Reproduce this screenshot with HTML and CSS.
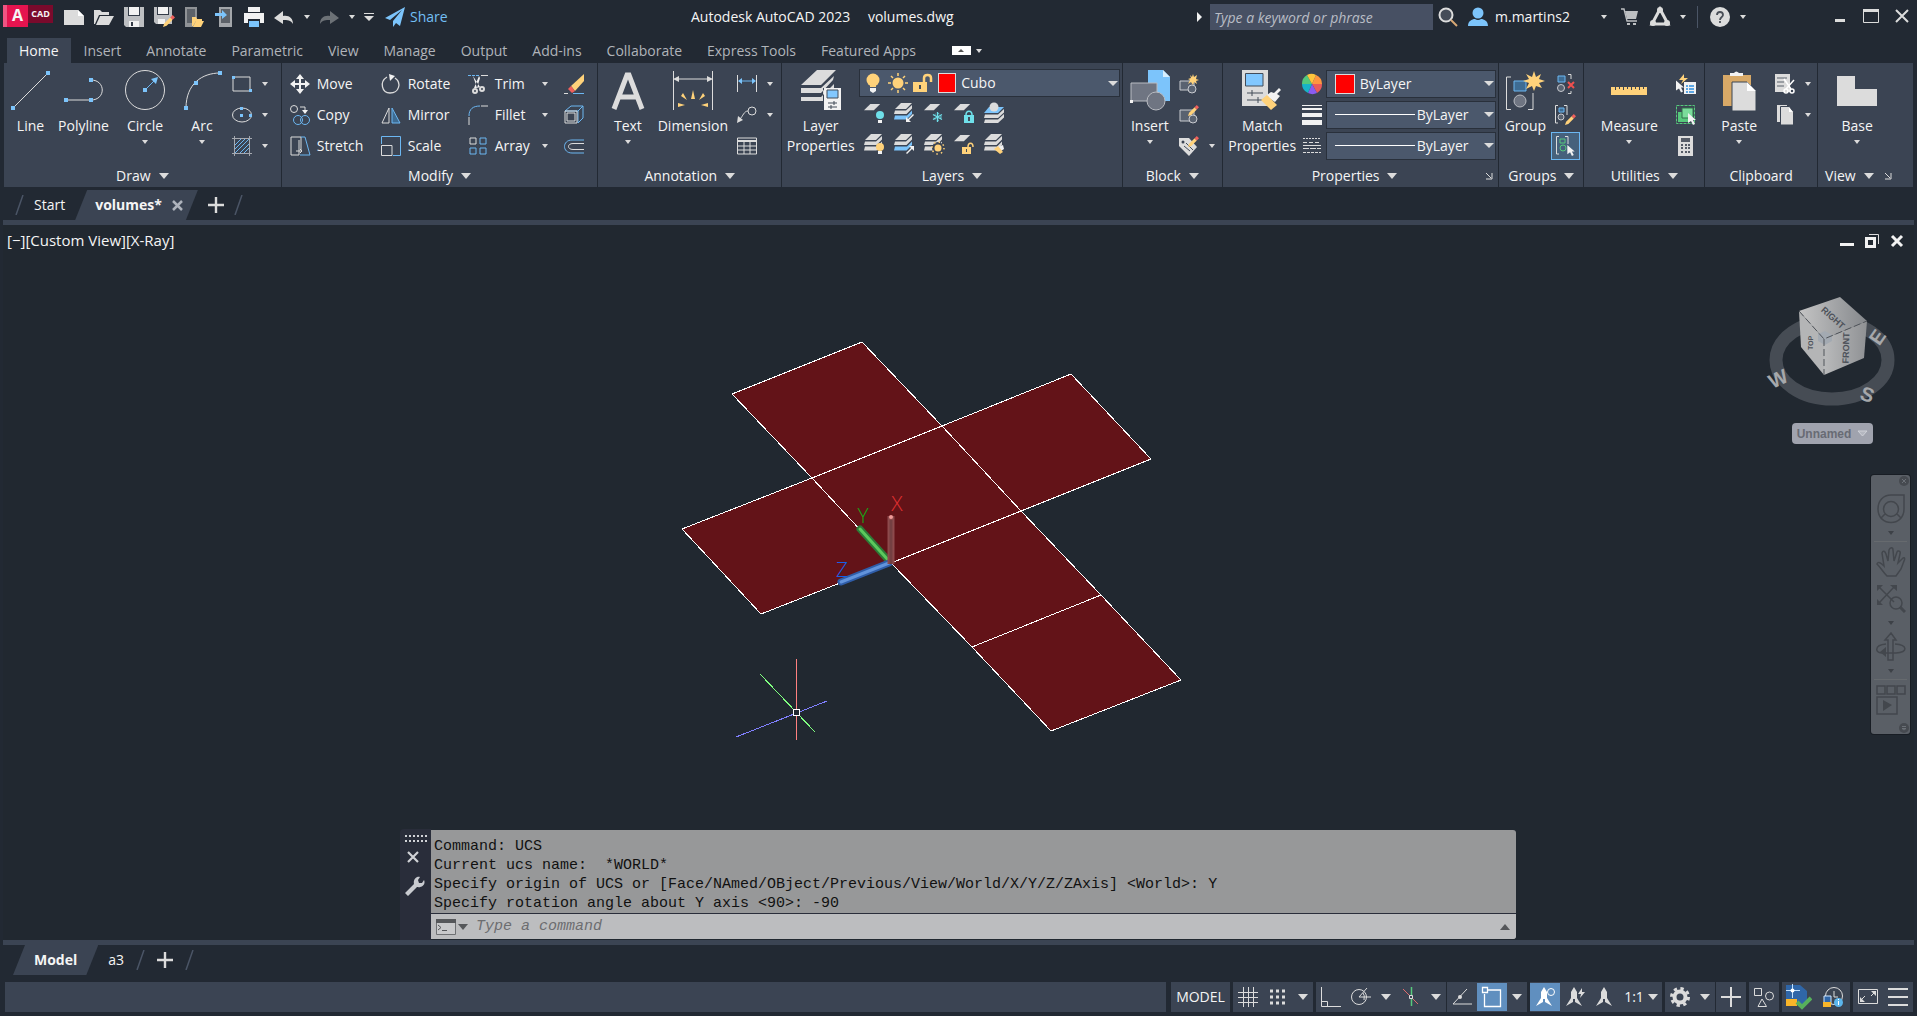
FILE: index.html
```html
<!DOCTYPE html>
<html lang="en">

<head>
    <meta charset="UTF-8">
    <meta name="viewport" content="width=device-width, initial-scale=1.0">
    <title>Autodesk AutoCAD 2023 - volumes.dwg</title>
    <link rel="stylesheet" href="styles.css">
</head>

<body>
    <!-- Shared icon parts -->
    <svg class="sprite" aria-hidden="true">
        <symbol id="sheet" viewBox="0 0 20 20"><path class="fg" d="M7 1H18L11 8H0Z"/></symbol>
        <symbol id="stack" viewBox="0 0 20 20"><path class="fg" d="M7 0H18L12 6H1Z"/><path class="fg" d="M1 7.500H12L18 2V5.500L12.500 11H0ZM1 12.500H13L18 7.500V11L12.500 16.500H0Z"/></symbol>
        <symbol id="stackblue" viewBox="0 0 20 20"><path class="fg" d="M7 0H18L12 6H1ZM1 7.500H12L18 2V5.500L12.500 11H0Z"/><path class="fb" d="M1 12.500H13L18 7.500V11L12.500 16.500H0Z"/></symbol>
        <symbol id="pencil" viewBox="0 0 10 10"><path class="fy" d="M0 10L1 7L6 2L8 4L3 9Z"/><path class="fr" d="M6 2L8 0L10 2L8 4Z"/></symbol>
        <symbol id="cursor" viewBox="0 0 8 12"><path class="fw" d="M0 0V10L3 8L5 12L7 11L5 7H8Z"/></symbol>
        <symbol id="launch" viewBox="0 0 8 8"><path class="ln" d="M1 1L6 6M7 1V7H1"/></symbol>
        <symbol id="slash" viewBox="0 0 9 20"><path d="M8 0L1 20" stroke="#4b5566" stroke-width="1.5"/></symbol>
        <symbol id="plus" viewBox="0 0 16 16"><path class="ln" stroke-width="2.4" d="M8 0V16M0 8H16"/></symbol>
        <symbol id="anno" viewBox="0 0 20 20"><path d="M9 0L12 5L12 11L17 19L10 15V12H8V15L1 19L6 11V5Z"/></symbol>
    </svg>

    <!-- Title bar -->
    <header class="titlebar">
        <button class="logo" aria-label="Application menu"><span class="logo-a">A</span><span class="logo-cad">CAD</span></button>
        <button class="tool" aria-label="New"><svg class="ico" viewBox="0 0 20 20"><path class="fg" d="M0 3H14L20 9V18H0Z"/><path fill="#fff" d="M14 3V9H20Z"/></svg></button>
        <button class="tool" aria-label="Open"><svg class="ico" viewBox="0 0 20 20"><path class="fg" d="M0 3H6L8 5H15V8H5L1 17H0Z"/><path class="fg" d="M6 9H20L15 18H2Z"/></svg></button>
        <button class="tool" aria-label="Save"><svg class="ico" viewBox="0 0 20 20"><path fill="#bdbfc2" d="M0 0H20V20H2L0 18Z"/><path fill="#333b47" d="M4 0H16V9H4Z"/><path class="fw" d="M5 0H15V8H5ZM5 14H15V20H5Z"/><path fill="#333b47" d="M7 15H9V19H7Z"/></svg></button>
        <button class="tool" aria-label="Save as"><svg class="ico" viewBox="0 0 20 20"><path fill="#bdbfc2" d="M0 0H18V17H2L0 15Z"/><path fill="#333b47" d="M3 0H15V8H3Z"/><path class="fw" d="M4 0H14V7H4ZM4 12H11V17H4Z"/><use href="#pencil" x="9" y="8" width="12" height="12"/></svg></button>
        <button class="tool" aria-label="Open from web"><svg class="ico" viewBox="0 0 20 20"><path fill="#8f9296" d="M1 0H13V20H1Z"/><path fill="#5d6269" d="M3 2H11V16H3Z"/><path class="fy" d="M8 10H12L13 12H18V14H12L9 19H8Z"/><path class="fy" d="M12 14H20L17 20H9Z"/></svg></button>
        <button class="tool" aria-label="Save to web"><svg class="ico" viewBox="0 0 20 20"><path fill="#a3a6aa" d="M5 0H18V20H5Z"/><path fill="#5d6269" d="M7 2H16V16H7Z"/><path class="fb" d="M1 6H8V3L13 8L8 12V9H1Z"/></svg></button>
        <button class="tool" aria-label="Plot"><svg class="ico" viewBox="0 0 20 20"><path class="fw" d="M4 0H16V5H4ZM0 6H20V16H16V12H4V16H0Z"/><path class="fb" d="M5 14H15V20H5Z"/></svg></button>
        <button class="tool" aria-label="Undo"><svg class="ico" viewBox="0 0 20 20"><path class="fg" d="M0 11L9 4V9C15 8 19 11 19 17C17 13 13 13 9 13V17Z"/></svg></button>
        <button class="drop" aria-label="Undo list"><span class="caret"></span></button>
        <button class="tool dim" aria-label="Redo"><svg class="ico" viewBox="0 0 20 20"><path class="fg" d="M20 11L11 4V9C5 8 1 11 1 17C3 13 7 13 11 13V17Z"/></svg></button>
        <button class="drop" aria-label="Redo list"><span class="caret"></span></button>
        <button class="drop more" aria-label="Customize toolbar"><svg width="10" height="10" viewBox="0 0 10 10"><path class="fg" d="M0 1H10V2H0ZM0 4H10L5 9Z"/></svg></button>
        <button class="share"><svg class="ico" viewBox="0 0 20 20"><path class="fb" d="M20 0L0 11L5 13L17 3L8 14V20L11 16L15 19Z"/></svg>Share</button>

        <h1 class="caption">Autodesk AutoCAD 2023 <span>volumes.dwg</span></h1>

        <div class="search">
            <svg width="5" height="10" viewBox="0 0 5 10"><path class="fw" d="M0 0L5 5L0 10Z"/></svg>
            <input type="text" placeholder="Type a keyword or phrase" aria-label="Search">
        </div>
        <button class="tool" aria-label="Search"><svg class="ico" viewBox="0 0 20 20"><circle cx="8" cy="8" r="6.5" fill="#454c58" stroke="#dcdcdc" stroke-width="2"/><path d="M13 13L19 19" stroke="#d8a875" stroke-width="2"/></svg></button>
        <button class="user"><svg class="ico" viewBox="0 0 20 20"><circle class="fb" cx="10" cy="6" r="5.5"/><path class="fb" d="M0 19C0 14 4 12 7 12Q10 14 13 12C16 12 20 14 20 19Z"/></svg>m.martins2<span class="caret"></span></button>
        <button class="tool" aria-label="App store"><svg class="ico" viewBox="0 0 20 20"><path fill="none" stroke="#bdbfc2" stroke-width="1.4" d="M1 2H4L7 14H17"/><path fill="#bdbfc2" d="M5 4H18L16 12H7Z"/><path fill="#bdbfc2" d="M7 16H10V18H7ZM13 16H16V18H13Z"/></svg></button>
        <button class="tool" aria-label="Autodesk apps"><svg class="ico" viewBox="0 0 20 20"><path fill="none" stroke="#dcdcdc" stroke-width="3" d="M10 2L2 17H18Z"/><g class="fg"><circle cx="10" cy="3" r="3"/><circle cx="3" cy="16" r="3"/><circle cx="17" cy="16" r="3"/></g></svg></button>
        <button class="drop" aria-label="Apps list"><span class="caret"></span></button>
        <span class="divider"></span>
        <button class="tool" aria-label="Help"><svg class="ico" viewBox="0 0 20 20"><circle class="fg" cx="10" cy="10" r="10"/><path fill="none" stroke="#4a4f58" stroke-width="1.8" d="M7 8C7 4 13 4 13 8C13 10 10 10 10 13M10 14V16"/></svg></button>
        <button class="drop" aria-label="Help list"><span class="caret"></span></button>
        <div class="window-buttons">
            <button aria-label="Minimize"><svg class="ico" viewBox="0 0 20 20"><path class="fg" d="M5 12H15V15H5Z"/></svg></button>
            <button aria-label="Maximize"><svg class="ico" viewBox="0 0 20 20"><path class="ln" d="M2.500 3V15.500H17.500V3Z"/><path class="fg" d="M2 2H18V5H2Z"/></svg></button>
            <button aria-label="Close"><svg class="ico" viewBox="0 0 20 20"><path class="ln" stroke-width="2" d="M4 3L16 15M16 3L4 15"/></svg></button>
        </div>
    </header>

    <!-- Ribbon tabs -->
    <nav class="ribbon-tabs">
        <a href="#" class="active">Home</a>
        <a href="#">Insert</a>
        <a href="#">Annotate</a>
        <a href="#">Parametric</a>
        <a href="#">View</a>
        <a href="#">Manage</a>
        <a href="#">Output</a>
        <a href="#">Add-ins</a>
        <a href="#">Collaborate</a>
        <a href="#">Express Tools</a>
        <a href="#">Featured Apps</a>
        <button class="collapse" aria-label="Minimize ribbon"><svg width="19" height="9" viewBox="0 0 19 9"><path fill="#fff" d="M0 0H19V9H0Z"/><path fill="#555" d="M9 3L12 6H6Z"/></svg><span class="caret"></span></button>
    </nav>

    <!-- Ribbon -->
    <main class="ribbon">
        <section class="panel">
            <div class="panel-body draw">
                <button class="big"><svg class="ico40" viewBox="0 0 40 40"><path class="ln" d="M2 38L37 3"/><path class="fb" d="M0 36H4V40H0ZM35 1H39V5H35Z"/></svg>Line</button>
                <button class="big"><svg class="ico40" viewBox="0 0 40 40"><path class="ln" d="M2 30H27C42 30 42 10 27 10"/><path class="fb" d="M0 28H4V32H0ZM25 28H29V32H25ZM25 8H29V12H25Z"/></svg>Polyline</button>
                <button class="big"><svg class="ico40" viewBox="0 0 40 40"><circle class="ln" cx="20" cy="20" r="19.5"/><path class="bl" d="M20 20L31 9"/><path class="fb" d="M18 18H22V22H18ZM33 7L26 9L31 14Z"/></svg>Circle<span class="caret"></span></button>
                <button class="big"><svg class="ico40" viewBox="0 0 40 40"><path class="ln" d="M4 38C4 14 20 3 38 3"/><path class="fb" d="M2 36H6V40H2ZM12 11H16V15H12ZM36 1H40V5H36Z"/></svg>Arc<span class="caret"></span></button>
                <div class="stack">
                    <button class="small" aria-label="Rectangle"><svg class="ico" viewBox="0 0 20 20"><path class="ln" d="M1 3H18V17H1Z"/><path class="fb" d="M0 2H3V5H0ZM17 15H20V18H17Z"/></svg><span class="caret"></span></button>
                    <button class="small" aria-label="Ellipse"><svg class="ico" viewBox="0 0 20 20"><ellipse class="ln" cx="10" cy="10" rx="9.5" ry="7"/><path class="fb" d="M8 2H11V5H8ZM8 9H11V12H8ZM17 9H20V12H17Z"/></svg><span class="caret"></span></button>
                    <button class="small" aria-label="Hatch"><svg class="ico" viewBox="0 0 20 20"><path fill="none" stroke="#a5a9b0" d="M0 2.5H20M0 17.5H20M2.500 0V20M17.500 0V20"/><path class="bl" d="M3 9L9 3M3 13L13 3M3 17L17 3M8 17L17 8M12 17L17 12"/></svg><span class="caret"></span></button>
                </div>
            </div>
            <h2 class="panel-title">Draw <span class="caret wide"></span></h2>
        </section>

        <section class="panel">
            <div class="panel-body modify">
                <button class="small"><svg class="ico" viewBox="0 0 20 20"><path class="fw" d="M10 0L14 5H11V9H15V6L20 10L15 14V11H11V15H14L10 20L6 15H9V11H5V14L0 10L5 6V9H9V5H6Z"/></svg>Move</button>
                <button class="small"><svg class="ico" viewBox="0 0 20 20"><path class="ln" stroke-width="1.300" d="M6 3C-2 8 1 19 9 19C18 19 21 9 14 4"/><path class="fw" d="M8 0L14 2L9 7Z"/></svg>Rotate</button>
                <button class="small"><svg class="ico" viewBox="0 0 20 20"><path class="bl" stroke-dasharray="3 1" d="M0 1.500H12"/><path class="ln" d="M13 1.500H20"/><path class="fw" d="M5 2L12 13L9 14ZM11 2L6 14L9 14L12 4Z"/><circle class="ln" stroke-width="2" cx="7" cy="17" r="2"/><circle class="ln" stroke-width="2" cx="14" cy="15" r="2"/></svg>Trim<span class="caret"></span></button>
                <button class="small" aria-label="Erase"><svg class="ico" viewBox="0 0 20 20"><path class="fy" d="M20 0V7L11 17L7 12Z"/><path class="fr" d="M7 12L11 17L8 19L4 15Z"/><path class="ln" d="M0 19.500H4"/><path class="bl" d="M9 19.500H20"/></svg></button>

                <button class="small"><svg class="ico" viewBox="0 0 20 20"><circle class="ln" cx="4" cy="4" r="3.500"/><path class="ln" d="M10 2H15V7"/><path class="fw" d="M12 5H18L15 9Z"/><circle class="bl" cx="8" cy="15" r="4.500"/><circle class="bl" cx="15" cy="15" r="4.500"/></svg>Copy</button>
                <button class="small"><svg class="ico" viewBox="0 0 20 20"><path class="ln" d="M8 3V18H1Z"/><path fill="#3e6c93" stroke="#6cb7f2" d="M11 3V18H19Z"/></svg>Mirror</button>
                <button class="small"><svg class="ico" viewBox="0 0 20 20"><path class="bl" d="M1 11C1 4 5 1 12 1"/><path class="ln" d="M1 12V20M13 1H20"/></svg>Fillet<span class="caret"></span></button>
                <button class="small" aria-label="Explode"><svg class="ico" viewBox="0 0 20 20"><path class="bl" d="M1 6L7 1H19L14 6ZM19 1V13L14 18M14 6V18"/><path class="ln" d="M1 6H13V18H1ZM3 8H11V16H3Z"/></svg></button>

                <button class="small"><svg class="ico" viewBox="0 0 20 20"><path class="ln" d="M11 14V1H1V19H9V4"/><path class="bl" d="M11 1H15L20 19H10"/><path class="ln" d="M6 15H12M10 13L12 15L10 17"/></svg>Stretch</button>
                <button class="small"><svg class="ico" viewBox="0 0 20 20"><path class="bl" d="M0.500 8V0.500H19.500V19.500H12"/><path class="ln" d="M0.500 9.500H11V19.500H0.500Z"/></svg>Scale</button>
                <button class="small"><svg class="ico" viewBox="0 0 20 20"><path class="ln" d="M2 2H8V8H2Z"/><path class="bl" d="M12 2H18V8H12ZM2 12H8V18H2ZM12 12H18V18H12Z"/></svg>Array<span class="caret"></span></button>
                <button class="small" aria-label="Offset"><svg class="ico" viewBox="0 0 20 20"><path class="bl" d="M20 4H8C-2 4 -2 17 8 17H20"/><path class="ln" d="M20 7.500H9C3 7.500 3 13.500 9 13.500H20"/></svg></button>
            </div>
            <h2 class="panel-title">Modify <span class="caret wide"></span></h2>
        </section>

        <section class="panel">
            <div class="panel-body annotation">
                <button class="big"><svg class="ico40" viewBox="0 0 40 40"><path fill="none" stroke="#dcdcdc" stroke-width="5" d="M6 39L19 5H21L34 39M11 27H29"/></svg>Text<span class="caret"></span></button>
                <button class="big"><svg class="ico40" viewBox="0 0 40 40"><path class="ln" d="M0.500 1V40M39.500 1V40M3 9H37"/><path class="fg" d="M0 9L6 6V12ZM40 9L34 6V12Z"/><path class="fy" d="M18 29L20 20L22 29ZM14 30L8 26L10 23ZM26 30L32 26L30 23ZM12 35L5 33V37ZM28 35L35 33V37Z"/></svg>Dimension</button>
                <div class="stack">
                    <button class="small" aria-label="Linear"><svg class="ico" viewBox="0 0 20 20"><path class="ln" d="M0.500 1V18M19.500 1V18"/><path class="bl" d="M2 7H18"/><path class="fb" d="M1 7L5 4V10ZM19 7L15 4V10Z"/></svg><span class="caret"></span></button>
                    <button class="small" aria-label="Leader"><svg class="ico" viewBox="0 0 20 20"><circle class="ln" cx="15" cy="6" r="4"/><path class="ln" d="M11 6C7 6 6 11 3 14"/><path class="fg" d="M0 18L1 11L6 15Z"/></svg><span class="caret"></span></button>
                    <button class="small" aria-label="Table"><svg class="ico" viewBox="0 0 20 20"><path class="ln" d="M0.500 2V18H19.500V2ZM0 10H20M0 14H20M7 6V18M13 6V18"/><path class="ln" stroke-width="2" d="M0 5H20"/></svg></button>
                </div>
            </div>
            <h2 class="panel-title">Annotation <span class="caret wide"></span></h2>
        </section>

        <section class="panel">
            <div class="panel-body layers">
                <button class="big"><svg class="ico40" viewBox="0 0 40 40"><path class="fg" d="M16 0H35L20 15H0ZM0 18H20L33 6L32 10L20 23H0ZM0 27H20L33 14V18H22V31H0Z"/><path class="fw" d="M23 18H40V40H23Z"/><path fill="#82c8ff" stroke="#434c59" d="M26 20H37V28H26Z"/><path stroke="#434c59" d="M27 33H36M27 37H36M33 31V35M30 35V39"/></svg>Layer<br>Properties</button>
                <div class="layer-tools">
                    <div class="combo">
                        <svg class="ico" viewBox="0 0 20 20"><circle class="fy" cx="10" cy="7" r="6.500"/><path class="fy" d="M7 10H13V14H7Z"/><path class="fw" d="M7 15H13V18L10 20L7 18Z"/></svg>
                        <svg class="ico" viewBox="0 0 20 20"><circle class="fy" cx="10" cy="10" r="5.500"/><path stroke="#ffd27a" stroke-width="1.500" d="M10 0V3M10 17V20M0 10H3M17 10H20M3 3L5 5M15 15L17 17M3 17L5 15M15 5L17 3"/></svg>
                        <svg class="ico" viewBox="0 0 20 20"><path class="fy" d="M0 9H14V19H0Z"/><path fill="none" stroke="#ffd27a" stroke-width="2.500" d="M11 10V5C11 1 18 1 18 5V9"/><path fill="#434c59" d="M6 12H8V16H6Z"/></svg>
                        <span class="swatch"></span>
                        <select aria-label="Layer"><option>Cubo</option></select>
                    </div>
                    <div class="tool-grid">
                        <button aria-label="Layer off"><svg class="ico" viewBox="0 0 20 20"><use href="#sheet" width="18" height="18"/><circle class="fc" cx="16" cy="12" r="4"/><path class="fw" d="M14 17H18V20H14Z"/></svg></button>
                        <button aria-label="Isolate"><svg class="ico" viewBox="0 0 20 20"><use href="#stackblue" width="20" height="20"/><path class="fw" d="M12 19V14L14 16L19 11L20 12L15 17L17 19Z"/></svg></button>
                        <button aria-label="Freeze"><svg class="ico" viewBox="0 0 20 20"><use href="#sheet" width="18" height="18"/><path stroke="#6fe0ea" stroke-width="1.300" d="M13.500 9V19M9 11.500L18 16.500M9 16.500L18 11.500"/><circle fill="none" stroke="#6fe0ea" stroke-dasharray="2 2" cx="13.500" cy="14" r="3.500"/></svg></button>
                        <button aria-label="Lock"><svg class="ico" viewBox="0 0 20 20"><use href="#sheet" width="18" height="18"/><path class="fc" d="M10 12H20V20H10Z"/><path fill="none" stroke="#6fe0ea" stroke-width="1.500" d="M12 12C12 7 18 7 18 12"/><path fill="#434c59" d="M14 14H16V18H14Z"/></svg></button>
                        <button aria-label="Make current"><svg class="ico" viewBox="0 0 20 20"><path class="fb" d="M5 4H20L14 10H0Z"/><path class="fg" d="M1 11.500H14L20 6V9.500L14 15H0ZM1 16.500H14L20 11V14.500L14 20H0Z"/><circle class="fg" cx="10" cy="4" r="4.500"/></svg></button>
                        <button aria-label="Turn all on"><svg class="ico" viewBox="0 0 20 20"><use href="#stack" width="20" height="20"/><circle class="fy" cx="16" cy="13" r="4"/><path class="fw" d="M14 17H18V20H14Z"/></svg></button>
                        <button aria-label="Unisolate"><svg class="ico" viewBox="0 0 20 20"><use href="#stackblue" width="20" height="20"/><path class="fw" d="M20 12V17L18 15L13 20L12 19L17 14L15 12Z"/></svg></button>
                        <button aria-label="Thaw"><svg class="ico" viewBox="0 0 20 20"><use href="#stack" width="20" height="20"/><circle fill="#3b4453" cx="14" cy="14" r="6"/><circle class="fy" cx="14" cy="14" r="3.500"/><circle fill="none" stroke="#ffd27a" stroke-width="1.500" stroke-dasharray="1.500 3.200" cx="14" cy="14" r="6"/></svg></button>
                        <button aria-label="Unlock"><svg class="ico" viewBox="0 0 20 20"><use href="#sheet" width="18" height="18"/><path class="fy" d="M8 13H17V20H8Z"/><path fill="none" stroke="#ffd27a" stroke-width="1.500" d="M14 13C14 8 19 8 19 13"/><path fill="#434c59" d="M12 15H13V18H12Z"/></svg></button>
                        <button aria-label="Match layer"><svg class="ico" viewBox="0 0 20 20"><use href="#stack" width="20" height="20"/><path class="fw" d="M14 13L19 11L20 15L17 17Z"/><path class="fy" d="M10 15L14 12L19 18L16 20Z"/></svg></button>
                    </div>
                </div>
            </div>
            <h2 class="panel-title">Layers <span class="caret wide"></span></h2>
        </section>

        <section class="panel">
            <div class="panel-body block">
                <button class="big"><svg class="ico40" viewBox="0 0 40 40"><path class="fb" d="M18 0H33L40 7V31H18Z"/><path fill="#d7efff" d="M33 0V7H40Z"/><path fill="#6f7582" stroke="#b9bcc2" d="M1 13H27V31H1Z"/><circle fill="#6f7582" stroke="#b9bcc2" cx="26" cy="31" r="9"/><path class="fw" d="M0 30H3V33H0Z"/></svg>Insert<span class="caret"></span></button>
                <div class="stack">
                    <button class="small" aria-label="Create"><svg class="ico" viewBox="0 0 20 20"><path fill="#596270" stroke="#c9cbd0" d="M1 7H15V16H1Z"/><circle fill="#596270" stroke="#c9cbd0" cx="13" cy="15" r="4"/><path class="fy" d="M14 0L15 3L18 1L17 5L20 6L17 7L18 10L15 8L14 11L12 8L9 10L11 6L9 5L12 4L11 1L13 3Z"/></svg></button>
                    <button class="small" aria-label="Edit"><svg class="ico" viewBox="0 0 20 20"><path fill="#596270" stroke="#c9cbd0" d="M1 5H15V16H1Z"/><circle fill="#596270" stroke="#c9cbd0" cx="14" cy="14" r="4"/><use href="#pencil" x="9" width="11" height="11"/></svg></button>
                    <button class="small" aria-label="Edit attributes"><svg class="ico" viewBox="0 0 20 20"><path class="fg" d="M0 2H10L18 11L10 20L0 10Z"/><circle fill="#3b4453" cx="4" cy="6" r="1.500"/><path stroke="#434c59" d="M7 7L14 14M5 10L11 15"/><use href="#pencil" x="9" width="11" height="11"/></svg><span class="caret"></span></button>
                </div>
            </div>
            <h2 class="panel-title">Block <span class="caret wide"></span></h2>
        </section>

        <section class="panel">
            <div class="panel-body props">
                <button class="big"><svg class="ico40" viewBox="0 0 40 40"><path class="fg" d="M0 0H26V36H0Z"/><path fill="#82c8ff" stroke="#434c59" d="M3.500 3.500H21V16H3.500Z"/><path stroke="#434c59" d="M5 23H21M5 30H21M10 20V26M16 27V33"/><path class="fw" d="M27 28L33 32L38 26L35 24L39 20L37 18L32 23L29 22L25 25Z"/><path class="fy" d="M19 30L25 25L35 35L29 40Z"/></svg>Match<br>Properties</button>
                <div class="stack">
                    <svg class="ico" viewBox="0 0 20 20"><path fill="#ff9640" d="M10 10L14 1A10 10 0 0 1 20 10Z"/><path fill="#ea5b5b" d="M10 10H20A10 10 0 0 1 15 19Z"/><path fill="#8a5cf0" d="M10 10L15 19A10 10 0 0 1 6 19Z"/><path fill="#17b3c7" d="M10 10L6 19A10 10 0 0 1 0 10Z"/><path fill="#53c97c" d="M10 10H0A10 10 0 0 1 5 1Z"/><path fill="#ffc53c" d="M10 10L5 1A10 10 0 0 1 14 1Z"/></svg>
                    <svg class="ico" viewBox="0 0 20 20"><path class="fw" d="M0 0H20V1H0ZM0 3H20V5H0ZM0 8H20V12H0ZM0 15H20V20H0Z"/></svg>
                    <svg class="ico" viewBox="0 0 20 20"><g class="ln"><path stroke-dasharray="2 1" d="M1 2.500H19"/><path stroke-dasharray="4 2" d="M1 6.500H19"/><path d="M1 9.500H19"/><path stroke-dasharray="6 1" d="M1 12.500H19"/><path stroke-dasharray="3 1" d="M1 16.500H19"/></g></svg>
                </div>
                <div class="stack">
                    <div class="combo"><span class="swatch"></span><select aria-label="Color"><option>ByLayer</option></select></div>
                    <div class="combo"><span class="line-sample"></span><select aria-label="Lineweight"><option>ByLayer</option></select></div>
                    <div class="combo"><span class="line-sample"></span><select aria-label="Linetype"><option>ByLayer</option></select></div>
                </div>
            </div>
            <h2 class="panel-title has-launcher">Properties <span class="caret wide"></span><svg class="launcher" width="8" height="8"><use href="#launch"/></svg></h2>
        </section>

        <section class="panel">
            <div class="panel-body groups">
                <button class="big"><svg class="ico40" viewBox="0 0 40 40"><path class="ln" d="M6 7H1.500V39.500H6M23 39.500H28V23"/><path fill="#3e6c93" stroke="#6cb7f2" d="M9 11H21V21H9Z"/><circle fill="#6f7582" stroke="#b9bcc2" cx="15" cy="31" r="6"/><path class="fy" d="M29 1L31 7L36 4L34 9L40 11L34 13L37 18L31 16L29 21L27 16L21 19L24 13L18 11L24 9L21 4L27 7Z"/></svg>Group</button>
                <div class="stack">
                    <button class="small" aria-label="Ungroup"><svg class="ico" viewBox="0 0 20 20"><path fill="#3e6c93" stroke="#6cb7f2" d="M3 2H10V8H3Z"/><circle fill="#596270" stroke="#c9cbd0" cx="6" cy="14" r="3.500"/><path class="ln" d="M13 0.500H16V5M13 19.500H16V17"/><path stroke="#f0504e" stroke-width="2" d="M13 8L19 14M19 8L13 14"/></svg></button>
                    <button class="small" aria-label="Group edit"><svg class="ico" viewBox="0 0 20 20"><path class="ln" d="M3 0.500H0.500V18H3M9 0.500H12V10"/><path fill="#3e6c93" stroke="#6cb7f2" d="M4 3H9V7H4Z"/><circle fill="#596270" stroke="#c9cbd0" cx="6" cy="12" r="3"/><use href="#pencil" x="10" y="9" width="11" height="11"/></svg></button>
                    <button class="small pressed" aria-label="Group selection"><svg class="ico" viewBox="0 0 20 20"><path class="ln" d="M4 0.500H1.500V18H4M10 0.500H13V8"/><path fill="none" stroke="#57c97c" d="M5 3H10V7H5Z"/><circle fill="none" stroke="#57c97c" cx="8" cy="12" r="3"/><use href="#cursor" x="12" y="9" width="8" height="11"/></svg></button>
                </div>
            </div>
            <h2 class="panel-title">Groups <span class="caret wide"></span></h2>
        </section>

        <section class="panel">
            <div class="panel-body utilities">
                <button class="big"><svg class="ico40" viewBox="0 0 40 40"><path class="fy" d="M2 17H38V25H2Z"/><path stroke="#3b4453" d="M6.500 17V20M10.500 17V19M14.500 17V20M18.500 17V19M22.500 17V20M26.500 17V19M30.500 17V20M34.500 17V19"/></svg>Measure<span class="caret"></span></button>
                <div class="stack">
                    <button class="small" aria-label="Quick select"><svg class="ico" viewBox="0 0 20 20"><path class="fy" d="M8 0L3 6H7L5 10L12 4H8Z"/><path class="fw" d="M8 8H20V20H8Z"/><path stroke="#2d8fe0" stroke-width="1.500" d="M10 12H12M13 12H18M10 15H12M13 15H18M10 18H12M13 18H18"/><use href="#cursor" y="6" width="8" height="13"/></svg></button>
                    <button class="small" aria-label="Select all"><svg class="ico" viewBox="0 0 20 20"><path fill="none" stroke="#57c97c" stroke-dasharray="3 1" d="M0.500 0.500H18.500V18.500H0.500Z"/><path fill="#57c97c" d="M2 7H13V17H2Z"/><path fill="#7bdc9b" stroke="#33704a" d="M6 3H17V13H6Z"/><use href="#cursor" x="12" y="8" width="8" height="12"/></svg></button>
                    <button class="small" aria-label="Quick calculator"><svg class="ico" viewBox="0 0 20 20"><path class="fg" d="M2 0H17V20H2Z"/><path fill="#555b66" d="M5 2H14V6H5ZM5 8H7V10H5ZM9 8H11V10H9ZM12 8H14V10H12ZM5 11H7V13H5ZM9 11H11V13H9ZM12 11H14V13H12ZM5 15H7V17H5ZM9 15H11V17H9ZM12 15H14V17H12Z"/></svg></button>
                </div>
            </div>
            <h2 class="panel-title">Utilities <span class="caret wide"></span></h2>
        </section>

        <section class="panel">
            <div class="panel-body clipboard">
                <button class="big"><svg class="ico40" viewBox="0 0 40 40"><path fill="#d8a967" d="M4 5H32V36H4Z"/><path class="fw" d="M11 6V3H15Q17 0 20 3H24V6Z"/><path class="fg" stroke="#3b4453" d="M13 12H28L37 21V41H13Z"/><path fill="#fff" d="M28 12V21H37Z"/></svg>Paste<span class="caret"></span></button>
                <div class="stack">
                    <button class="small" aria-label="Cut"><svg class="ico" viewBox="0 0 20 20"><path class="fg" d="M0 0H15V18H0Z"/><path stroke="#59606b" d="M2 4H12M2 8H9M2 12H9"/><path stroke="#fff" stroke-width="1.500" d="M9 5L16 15M19 6L11 15"/><circle fill="none" stroke="#fff" stroke-width="1.500" cx="11" cy="17" r="2"/><circle fill="none" stroke="#fff" stroke-width="1.500" cx="17" cy="17" r="2"/></svg><span class="caret"></span></button>
                    <button class="small" aria-label="Copy"><svg class="ico" viewBox="0 0 20 20"><path class="fg" d="M2 0H12V17H2Z"/><path class="fg" stroke="#3b4453" d="M5.500 1.500H14L18.500 7V20H5.500Z"/><path fill="#fff" d="M14 2V7H18Z"/></svg><span class="caret"></span></button>
                </div>
            </div>
            <h2 class="panel-title">Clipboard</h2>
        </section>

        <section class="panel">
            <div class="panel-body view">
                <button class="big"><svg class="ico40" viewBox="0 0 40 40"><path class="fg" d="M0 6H18V19H40V36H0Z"/></svg>Base<span class="caret"></span></button>
            </div>
            <h2 class="panel-title view-title">View <span class="caret wide"></span><svg width="8" height="8"><use href="#launch"/></svg></h2>
        </section>
    </main>

    <!-- Drawing file tabs -->
    <nav class="file-tabs">
        <svg class="slash"><use href="#slash"/></svg>
        <a href="#">Start</a>
        <a href="#" class="file-tab">volumes* <svg width="11" height="11" viewBox="0 0 11 11"><path stroke="#aeb3bc" stroke-width="2.500" d="M1 1L10 10M10 1L1 10"/></svg></a>
        <button class="add" aria-label="New drawing"><svg width="16" height="16"><use href="#plus"/></svg></button>
        <svg class="slash"><use href="#slash"/></svg>
    </nav>

    <!-- Drawing area -->
    <div class="viewport">
        <svg class="drawing" viewBox="3 225 1911 715">
            <g fill="#631318" stroke="#fff" shape-rendering="crispEdges">
                <path d="M732 394L862 342L942 426L812 478Z"/>
                <path d="M942 426L1071 374L1151 459L1021 511Z"/>
                <path d="M682 529L812 478L891 563L761 614Z"/>
                <path d="M812 478L942 426L1021 511L891 563Z"/>
                <path d="M891 563L1021 511L1101 595L972 647Z"/>
                <path d="M972 647L1101 595L1181 680L1051 731Z"/>
            </g>
            <g stroke-linecap="round">
                <path stroke="#2d7a38" stroke-width="7" d="M860 529L889 561"/>
                <path stroke="#5cc95c" stroke-width="3" d="M860 529L889 561"/>
                <path stroke="#2f5da8" stroke-width="7" d="M841 582L889 563"/>
                <path stroke="#6293db" stroke-width="3" d="M841 582L889 563"/>
                <path stroke="#8d4a4c" stroke-width="7" stroke-linecap="butt" d="M891 516V564"/>
                <path stroke="#744042" stroke-width="3" stroke-linecap="butt" d="M891 520V564"/>
                <circle fill="#f09a98" cx="891" cy="517" r="2"/>
            </g>
            <g class="axis">
                <text x="897" y="511" fill="#e03030">X</text>
                <text x="863" y="523" fill="#17a017">Y</text>
                <text x="842" y="577" fill="#1560e8">Z</text>
            </g>
            <g fill="none" shape-rendering="crispEdges">
                <path stroke="#ff8080" d="M796.500 659V740"/>
                <path stroke="#80ff80" d="M760 674L815 732"/>
                <path stroke="#8080ff" d="M736 737L827 701"/>
                <path stroke="#fff" fill="#212830" d="M793.500 709.500H799.500V715.500H793.500Z"/>
            </g>
        </svg>

        <button class="view-label">[−][Custom View][X-Ray]</button>
        <div class="view-buttons">
            <button aria-label="Minimize view"><svg width="14" height="14" viewBox="0 0 14 14"><path class="fw" d="M0 9H14V12H0Z"/></svg></button>
            <button aria-label="Restore view"><svg width="14" height="14" viewBox="0 0 14 14"><path fill="none" stroke="#f2f2f2" stroke-width="3" d="M1.500 4.500H9.500V12.500H1.500Z"/><path class="ln" d="M4 0.500H13.500V10"/></svg></button>
            <button aria-label="Close view"><svg width="14" height="14" viewBox="0 0 14 14"><path stroke="#f2f2f2" stroke-width="3" d="M2 2L12 12M12 2L2 12"/></svg></button>
        </div>

        <!-- View cube and compass -->
        <div class="viewcube">
            <svg width="140" height="120" viewBox="1765 292 140 120">
                <defs>
                    <linearGradient id="cubeTop"><stop offset="0" stop-color="#c4c4c4"/><stop offset="1" stop-color="#85888c"/></linearGradient>
                    <linearGradient id="cubeFront"><stop offset="0" stop-color="#b9babb"/><stop offset="1" stop-color="#8f9194"/></linearGradient>
                </defs>
                <ellipse cx="1833" cy="360" rx="56" ry="39" fill="none" stroke="#464c54" stroke-width="13"/>
                <path fill="url(#cubeTop)" d="M1800 311L1841 297L1868 321L1825 339Z"/>
                <path fill="#b4b5b6" d="M1800 311L1825 339V375L1802 347Z"/>
                <path fill="url(#cubeFront)" d="M1825 339L1868 321L1865 358L1825 375Z"/>
                <path fill="#a3aab2" d="M1819 334L1826 331L1833 335V341L1826 345L1819 341Z"/>
                <path fill="none" stroke="#50545a" stroke-dasharray="7 3" d="M1800 311L1825 339L1868 321M1825 339V375"/>
                <g class="face">
                    <text transform="translate(1832 320) rotate(42)">RIGHT</text>
                    <text transform="translate(1850 348) rotate(-88)">FRONT</text>
                    <text class="tiny" transform="translate(1814 343) rotate(-88)">TOP</text>
                </g>
                <g class="compass">
                    <text transform="translate(1782 385) rotate(-25)">W</text>
                    <text transform="translate(1866 401) rotate(20)">S</text>
                    <text transform="translate(1884 341) rotate(-55)">E</text>
                </g>
            </svg>
            <button class="ucs-name">Unnamed <svg width="11" height="7" viewBox="0 0 11 7"><path fill="#b4b7c0" stroke="#cfd1d8" d="M1 1H10L5.500 6Z"/></svg></button>
        </div>

        <!-- Navigation bar -->
        <div class="navbar">
            <button class="nav-corner" aria-label="Close"><svg width="10" height="10" viewBox="0 0 10 10"><circle fill="#464a50" cx="5" cy="5" r="5"/><path stroke="#6b7077" d="M3 3L7 7M7 3L3 7"/></svg></button>
            <button class="nav-tool" aria-label="Steering wheel"><svg width="30" height="30" viewBox="0 0 30 30"><path class="nv" d="M15 1H28V15C28 33 2 33 2 15C2 7 7 1 15 1Z"/><circle class="nv" cx="15" cy="15" r="7.500"/><path class="nv" d="M9 20L5 24M21 20L25 24"/></svg><span class="caret"></span></button>
            <button class="nav-tool line" aria-label="Pan"><svg width="30" height="30" viewBox="0 0 30 30"><path class="nv" d="M11 29C7 25 5 21 1 17C2 14 5 16 8 19L6 6C7 3 9 4 10 7L12 14L13 3C14 0 17 0 17 3L18 14L21 5C22 3 25 4 24 7L22 16L27 11C29 10 29 12 28 14L25 22L20 29Z"/></svg></button>
            <button class="nav-tool" aria-label="Zoom extents"><svg width="30" height="30" viewBox="0 0 30 30"><path class="nv" d="M3 3L18 18M3 19L18 3"/><path class="nf" d="M1 1H7L1 7ZM14 1H21V7ZM1 15V21H7Z"/><circle class="nv" cx="20" cy="19" r="6"/><path class="nv thick" d="M24 23L29 28"/></svg><span class="caret"></span></button>
            <button class="nav-tool" aria-label="Orbit"><svg width="30" height="30" viewBox="0 0 30 30"><path class="nv" d="M12 28V8H9L15 1L20 8H17V28ZM10 12C-2 13 -2 22 8 21M19 12C32 13 32 20 20 21H10"/><path class="nf" d="M4 20L10 15V25Z"/></svg><span class="caret"></span></button>
            <button class="nav-tool line" aria-label="Show motion"><svg width="30" height="30" viewBox="0 0 30 30"><path class="nv" d="M1 1H9V9H1ZM11 1H19V9H11ZM21 1H29V9H21ZM1 12H21V29H1Z"/><path class="nf" d="M7 15V26L16 20Z"/></svg></button>
            <button class="nav-corner bottom" aria-label="Options"><svg width="10" height="10" viewBox="0 0 10 10"><circle fill="#464a50" cx="5" cy="5" r="5"/><path stroke="#6b7077" d="M3 3.500H7M3 5.500H7L5 7Z"/></svg></button>
        </div>

        <!-- Command line -->
        <div class="command">
            <div class="command-side">
                <svg width="22" height="8" viewBox="0 0 22 8"><path stroke="#d0d2d6" stroke-width="2" stroke-dasharray="2 2" d="M0 1H22M0 6H22"/></svg>
                <button aria-label="Close command line"><svg width="12" height="12" viewBox="0 0 12 12"><path stroke="#d0d2d6" stroke-width="2.200" d="M1 1L11 11M11 1L1 11"/></svg></button>
                <button aria-label="Customize"><svg width="20" height="20" viewBox="0 0 20 20"><path fill="#c9cbd0" d="M0 17L9 8C8 4 11 0 15 1L13 4L14 7L17 7L19 4C21 8 17 12 12 11L3 20Z"/></svg></button>
            </div>
            <div class="command-main">
                <pre class="history">Command: UCS
Current ucs name:  *WORLD*
Specify origin of UCS or [Face/NAmed/OBject/Previous/View/World/X/Y/Z/ZAxis] &lt;World&gt;: Y
Specify rotation angle about Y axis &lt;90&gt;: -90</pre>
                <div class="prompt">
                    <svg width="20" height="16" viewBox="0 0 20 16"><path fill="#c8c9cb" stroke="#6e7073" d="M0.500 0.500H19.500V15.500H0.500Z"/><path fill="#55575a" d="M0 0H20V4H0Z"/><path fill="none" stroke="#55575a" d="M2 6L5 8.500L2 11M6 11.500H11"/></svg>
                    <span class="caret wide"></span>
                    <input type="text" placeholder="Type a command" aria-label="Command">
                    <span class="caret up"></span>
                </div>
            </div>
        </div>
    </div>

    <!-- Layout tabs -->
    <nav class="layout-tabs">
        <a href="#" class="layout-tab">Model</a>
        <a href="#">a3</a>
        <svg class="slash"><use href="#slash"/></svg>
        <button class="add" aria-label="New layout"><svg width="16" height="16"><use href="#plus"/></svg></button>
        <svg class="slash"><use href="#slash"/></svg>
    </nav>

    <!-- Status bar -->
    <footer class="status">
        <div class="status-fill"></div>
        <div class="seg"><button class="model">MODEL</button></div>
        <div class="seg">
            <button aria-label="Grid"><svg class="ico" viewBox="0 0 20 20"><path class="ln" d="M5.500 0V20M10.500 0V20M15.500 0V20M0 5.500H20M0 10.500H20M0 15.500H20"/></svg></button>
            <button aria-label="Snap"><svg class="ico" viewBox="0 0 20 20"><path fill="none" stroke="#dcdcdc" stroke-width="3" stroke-dasharray="3 3" d="M2 4H17M2 10H17M2 16H17"/></svg></button>
            <button class="drop" aria-label="Snap list"><span class="caret wide"></span></button>
        </div>
        <div class="seg joined">
            <button aria-label="Ortho"><svg class="ico" viewBox="0 0 20 20"><path class="ln" d="M0.500 0V19.500H20M0 14.500H6.500V20"/></svg></button>
            <button aria-label="Polar"><svg class="ico" viewBox="0 0 20 20"><circle class="ln" cx="8" cy="10" r="7.500"/><path class="ln" d="M16 1L8 10H20M12 6Q14 8 13 13"/></svg></button>
            <button class="drop" aria-label="Polar list"><span class="caret wide"></span></button>
            <button aria-label="Isodraft"><svg class="ico" viewBox="0 0 20 20"><path stroke="#e06c6c" d="M2 2L17 17"/><path stroke="#57c97c" stroke-width="1.500" d="M10.500 0V19"/><path fill="#3b4453" stroke="#dcdcdc" d="M8.500 8.500H11.500V11.500H8.500Z"/></svg></button>
            <button class="drop" aria-label="Isodraft list"><span class="caret wide"></span></button>
        </div>
        <div class="seg">
            <button aria-label="Object tracking"><svg class="ico" viewBox="0 0 20 20"><path class="ln" d="M15 2L1 17H20"/><circle class="fg" cx="8" cy="10" r="2"/></svg></button>
            <button class="on" aria-label="Object snap"><svg class="ico" viewBox="0 0 20 20"><path fill="none" stroke="#fff" stroke-width="1.300" d="M6 3H18.500V19.500H2.500V7M0.500 0.500H5.500V5.500H0.500Z"/></svg></button>
            <button class="drop" aria-label="Snap modes"><span class="caret wide"></span></button>
        </div>
        <div class="seg">
            <button class="on" aria-label="Annotation visibility"><svg class="ico" viewBox="0 0 20 20"><use href="#anno" fill="#fff" width="20" height="20"/><circle fill="none" stroke="#fff" cx="16" cy="5" r="3.500"/></svg></button>
            <button aria-label="Auto scale"><svg class="ico" viewBox="0 0 20 20"><use href="#anno" fill="#dcdcdc" width="20" height="20"/><path class="fg" d="M17 1L13 7H16L15 11L20 5H17Z"/></svg></button>
            <button aria-label="Annotation"><svg class="ico" viewBox="0 0 20 20"><use href="#anno" fill="#dcdcdc" width="20" height="20"/></svg></button>
            <button class="scale">1:1 <span class="caret wide"></span></button>
        </div>
        <div class="seg joined">
            <button aria-label="Workspace"><svg class="ico" viewBox="0 0 20 20"><circle fill="none" stroke="#dcdcdc" stroke-width="4" cx="10" cy="10" r="5.500"/><circle fill="none" stroke="#dcdcdc" stroke-width="3" stroke-dasharray="3.300 3.400" cx="10" cy="10" r="8.500"/></svg></button>
            <button class="drop" aria-label="Workspace list"><span class="caret wide"></span></button>
        </div>
        <div class="seg"><button aria-label="Annotation monitor"><svg class="ico" viewBox="0 0 20 20"><path stroke="#dcdcdc" stroke-width="2" d="M10 0V20M0 10H20"/></svg></button></div>
        <div class="seg"><button aria-label="Isolate objects"><svg class="ico" viewBox="0 0 20 20"><path class="ln" d="M0.500 1.500H7.500V8.500H0.500ZM8 12L12.500 19.500H4Z"/><circle class="ln" cx="15.500" cy="9" r="4"/></svg></button></div>
        <div class="seg roomy">
            <button aria-label="Graphics performance"><svg width="26" height="26" viewBox="0 0 26 26"><path fill="#2f66a8" d="M0 1H14L21 7V17L14 23L10 17H0Z"/><path stroke="#bfe0ff" d="M6.500 0V14M0 6.500H14"/><circle fill="#fff" cx="6.500" cy="6.500" r="2"/><path fill="#f9b529" d="M0 15H11V22H0Z"/><path fill="none" stroke="#57b05c" stroke-width="4" d="M11 18L16 23L25 14"/></svg></button>
            <button aria-label="Recovery"><svg class="ico" viewBox="0 0 20 20"><circle class="ln" cx="11" cy="9" r="8.500"/><path class="ln" d="M11 4V10H15"/><path fill="#2f66a8" stroke="#cfe6ff" d="M1 9H8V17H1Z"/><path fill="#f9b529" d="M0 15H8V20H0Z"/><circle fill="#5bb5ec" cx="15.500" cy="15.500" r="4.500"/><path stroke="#fff" d="M15.500 14V18M15.500 12V13"/></svg></button>
        </div>
        <div class="seg">
            <button aria-label="Clean screen"><svg class="ico" viewBox="0 0 20 20"><path class="ln" d="M0.500 2.500H19.500V16.500H0.500ZM3 13L7 9M17 5L13 9"/><path class="fg" d="M2 10V15H7ZM18 9V4H13Z"/></svg></button>
            <button aria-label="Customization"><svg class="ico" viewBox="0 0 20 20"><path class="fg" d="M0 1H20V3H0ZM0 9H20V11H0ZM0 17H20V19H0Z"/></svg></button>
        </div>
    </footer>
</body>

</html>
```
FILE: styles.css
```css
/* Base styles */
* {
    box-sizing: border-box;
}

body {
    margin: 0;
    height: 100vh;
    display: flex;
    flex-direction: column;
    background-color: #222933;
    color: #f5f5f5;
    font-family: "Open Sans", "Noto Sans", sans-serif;
    font-size: 14px;
    line-height: 20px;
    overflow: hidden;
}

button,
input,
select {
    font: inherit;
    color: inherit;
    background: none;
    border: none;
    margin: 0;
    padding: 0;
}

button {
    display: flex;
    align-items: center;
    justify-content: center;
    white-space: nowrap;
}

a {
    color: inherit;
    text-decoration: none;
}

h1,
h2 {
    margin: 0;
    font-size: 14px;
    font-weight: normal;
}

svg {
    flex: none;
}

/* Icon colors and sizes */
.sprite {
    position: absolute;
    width: 0;
    height: 0;
}

.ico {
    width: 20px;
    height: 20px;
    overflow: visible;
}

.ico40 {
    width: 40px;
    height: 40px;
    overflow: visible;
}

.ln {
    fill: none;
    stroke: #dcdcdc;
}

.bl {
    fill: none;
    stroke: #6cb7f2;
}

.fg {
    fill: #dcdcdc;
}

.fw {
    fill: #f2f2f2;
}

.fb {
    fill: #7cc4fb;
}

.fy {
    fill: #ffd27a;
}

.fr {
    fill: #f0605c;
}

.fc {
    fill: #6fe0ea;
}

/* Drop-down arrows */
.caret {
    flex: none;
    width: 0;
    border: 3px solid transparent;
    border-top: 4px solid #dcdcdc;
    border-bottom: 0;
}

.caret.wide {
    border-width: 6px 5px 0;
}

.caret.up {
    border-width: 0 5px 6px;
    border-bottom: 6px solid #55575a;
}

/* Title bar */
.titlebar {
    display: flex;
    align-items: center;
    height: 34px;
    margin-bottom: 4px;
    padding-left: 3px;
}

.logo {
    width: 50px;
    height: 24px;
    margin-right: 6px;
    align-items: flex-start;
    justify-content: flex-start;
    font-weight: bold;
}

.logo-a {
    width: 25px;
    height: 22px;
    background-color: #e5144f;
    border-left: 4px solid #ee5583;
    font-size: 16px;
    line-height: 21px;
}

.logo-cad {
    flex: 1;
    height: 18px;
    background-color: #7a0a2c;
    font-size: 9px;
    line-height: 18px;
}

.tool {
    width: 30px;
    height: 30px;
}

.dim {
    opacity: 0.4;
}

.drop {
    width: 15px;
    height: 30px;
}

.more {
    width: 20px;
}

.share {
    gap: 5px;
    padding-left: 6px;
    color: #72bff5;
}

.caption {
    flex: 1;
    text-align: center;
    white-space: nowrap;
}

.caption span {
    margin-left: 14px;
}

.search {
    display: flex;
    align-items: center;
    gap: 8px;
}

.search input {
    width: 223px;
    height: 26px;
    padding: 0 4px;
    background-color: #475063;
    font-style: italic;
}

.search input::placeholder {
    color: #b9bdc5;
    opacity: 1;
}

.user {
    width: 152px;
    justify-content: flex-start;
    padding: 0 8px 0 5px;
    gap: 7px;
}

.user .caret {
    margin-left: auto;
}

.divider {
    width: 1px;
    height: 22px;
    margin: 0 7px;
    background-color: #4b5566;
}

.window-buttons {
    display: flex;
    margin-left: 74px;
}

.window-buttons button {
    width: 31px;
    height: 34px;
}

/* Ribbon tabs */
.ribbon-tabs {
    display: flex;
    gap: 1px;
    padding-left: 7px;
    color: #b0b4ba;
}

.ribbon-tabs a {
    height: 25px;
    padding: 0 12px;
    line-height: 25px;
    white-space: nowrap;
}

.ribbon-tabs .active {
    background-color: #3b4453;
    color: #f5f5f5;
}

.collapse {
    margin-left: 23px;
    gap: 5px;
}

/* Ribbon */
.ribbon {
    display: grid;
    grid-template-columns: 278fr 317fr 184fr 341fr 100fr 277fr 85fr 121fr 113fr 95fr;
    margin: 0 4px;
    background-color: #3b4453;
}

.panel {
    min-width: 0;
    border-right: 1px solid #222933;
}

.panel:last-child {
    border-right: none;
}

.panel-body {
    display: grid;
    height: 102px;
    align-items: start;
}

.panel-title {
    position: relative;
    display: flex;
    align-items: center;
    justify-content: center;
    gap: 8px;
    height: 22px;
}

.has-launcher {
    padding-right: 12px;
}

.launcher {
    position: absolute;
    right: 5px;
}

.view-title {
    justify-content: flex-start;
    padding-left: 7px;
}

.view-title svg {
    margin-left: 2px;
}

.draw {
    grid-template-columns: 53px 53px 70px 44px 1fr;
}

.modify {
    grid-template-columns: 91px 87px 96px 1fr;
    grid-auto-rows: 31px;
    padding: 5px 0 0 8px;
}

.annotation {
    grid-template-columns: 59px 71px 1fr;
}

.layers {
    grid-template-columns: 77px 1fr;
}

.block {
    grid-template-columns: 54px 1fr;
}

.props {
    grid-template-columns: 79px 24px 1fr;
}

.groups {
    grid-template-columns: 52px 1fr;
}

.utilities {
    grid-template-columns: 90px 1fr;
}

.clipboard {
    grid-template-columns: 68px 1fr;
}

.view {
    grid-template-columns: 78px;
}

/* Large button: icon above its label */
.big {
    flex-direction: column;
    justify-content: flex-start;
    padding-top: 7px;
}

.big svg {
    margin-bottom: 6px;
}

.big .caret {
    margin-top: 4px;
}

/* Small button: icon beside its label */
.small {
    height: 31px;
    justify-content: flex-start;
    gap: 7px;
}

.small .caret {
    margin-left: 3px;
}

.modify .small {
    padding-right: 16px;
}

.modify .small .caret {
    margin-left: auto;
}

.stack {
    display: grid;
    grid-auto-rows: 31px;
    align-items: center;
    padding-top: 5px;
}

.draw .stack {
    padding-left: 8px;
}

.annotation .stack {
    padding-left: 9px;
}

.block .stack,
.clipboard .stack,
.utilities .stack {
    padding-left: 2px;
}

.groups .small {
    width: 29px;
    padding-left: 4px;
}

.groups .pressed {
    height: 28px;
    padding-left: 3px;
    border: 1px solid #6cb7f2;
    background-color: #46617c;
}

/* Property drop-downs */
.combo {
    position: relative;
    display: flex;
    align-items: center;
    height: 28px;
    margin-right: 2px;
    padding-left: 8px;
    gap: 5px;
    border: 1px solid #29303b;
    background-color: #4b586c;
}

.combo::after {
    content: "";
    position: absolute;
    right: 1px;
    border: 5px solid transparent;
    border-top-color: #dcdcdc;
    border-bottom: 0;
    pointer-events: none;
}

.combo select {
    flex: 1;
    min-width: 0;
    height: 26px;
    appearance: none;
    outline: none;
}

.swatch {
    width: 20px;
    height: 20px;
    border: 1px solid #dcdcdc;
    background-color: #ff0000;
}

.line-sample {
    width: 80px;
    height: 1px;
    margin-right: -3px;
    background-color: #fff;
}

.layer-tools {
    padding-top: 6px;
}

.layer-tools .combo {
    padding-left: 3px;
}

.layer-tools .swatch {
    width: 18px;
}

.tool-grid {
    display: grid;
    grid-template-columns: repeat(5, 30px);
    grid-auto-rows: 31px;
}

/* Drawing file tabs */
.file-tabs {
    display: flex;
    align-items: center;
    height: 33px;
    padding: 3px 0 0 15px;
    gap: 10px;
}

.slash {
    width: 9px;
    height: 20px;
}

.file-tab {
    display: flex;
    align-items: center;
    gap: 10px;
    height: 30px;
    padding: 0 15px 0 20px;
    background-color: #3b4453;
    clip-path: polygon(12px 0, 100% 0, calc(100% - 12px) 100%, 0 100%);
    font-weight: bold;
}

/* Drawing area */
.viewport {
    position: relative;
    flex: 1;
    min-height: 0;
    margin: 0 3px;
    border-top: 5px solid #3b4453;
    border-bottom: 5px solid #3b4453;
    background-color: #212830;
}

.drawing {
    position: absolute;
    inset: 0;
    width: 100%;
    height: 100%;
}

.axis text {
    font-size: 21px;
    font-weight: 300;
    text-anchor: middle;
}

.view-label {
    position: absolute;
    top: 5px;
    left: 4px;
    font-size: 15px;
}

.view-buttons {
    position: absolute;
    top: 9px;
    right: 10px;
    display: flex;
    gap: 11px;
}

/* View cube */
.viewcube {
    position: absolute;
    top: 67px;
    right: 10px;
    display: flex;
    flex-direction: column;
    align-items: center;
    gap: 11px;
}

.face {
    fill: #4d525a;
    font-family: "Liberation Sans", sans-serif;
    font-size: 9px;
    font-weight: bold;
    text-anchor: middle;
}

.face .tiny {
    font-size: 7px;
}

.compass {
    fill: #a6a8ab;
    font-family: "Liberation Sans", sans-serif;
    font-size: 20px;
    font-weight: bold;
    text-anchor: middle;
}

.ucs-name {
    height: 21px;
    margin-right: 3px;
    padding: 0 5px;
    gap: 6px;
    border-radius: 4px;
    background-color: #a0a3ae;
    color: #686b74;
    font-family: "Liberation Sans", sans-serif;
    font-size: 12px;
    font-weight: bold;
}

/* Navigation bar */
.navbar {
    position: absolute;
    top: 250px;
    right: 4px;
    width: 39px;
    height: 259px;
    display: flex;
    flex-direction: column;
    border-radius: 3px;
    background-color: #5a5f66;
    box-shadow: 0 0 0 1px #181d24;
}

.nav-corner {
    align-self: flex-end;
    padding: 1px;
}

.nav-corner.bottom {
    margin-top: auto;
}

.nav-tool {
    flex-direction: column;
    padding-top: 7px;
    gap: 7px;
}

.nav-tool .caret {
    border-top-color: #3d4147;
}

.nav-tool.line {
    margin: 6px 3px 0;
    padding-top: 5px;
    border-top: 1px solid #666a6e;
}

.nv {
    fill: none;
    stroke: #43474d;
    stroke-width: 1.500;
}

.nv.thick {
    stroke-width: 3;
}

.nf {
    fill: #43474d;
}

/* Command line */
.command {
    position: absolute;
    left: 397px;
    right: 398px;
    bottom: 0;
    display: flex;
}

.command-side {
    width: 31px;
    display: flex;
    flex-direction: column;
    align-items: flex-start;
    gap: 8px;
    padding: 6px 0 0 5px;
    border-radius: 4px 0 0 0;
    background-color: #292d3a;
}

.command-side button:first-of-type {
    padding-left: 2px;
}

.command-side button:last-child {
    margin-top: 5px;
}

.command-main {
    flex: 1;
    margin: 1px 0;
    border-radius: 0 3px 3px 0;
    overflow: hidden;
    background-color: #979899;
    color: #111;
    font-family: "Liberation Mono", monospace;
    font-size: 15px;
}

.history {
    margin: 0;
    padding: 7px 3px 0;
    font: inherit;
    line-height: 19px;
}

.prompt {
    display: flex;
    align-items: center;
    height: 26px;
    padding: 0 6px 0 5px;
    gap: 2px;
    border-top: 1px solid #292d3a;
    background-color: #bcbdbf;
}

.prompt .caret.wide {
    border-top-color: #55575a;
}

.prompt input {
    flex: 1;
    padding-left: 6px;
    font-style: italic;
}

.prompt input::placeholder {
    color: #6c6d70;
    opacity: 1;
}

/* Layout tabs */
.layout-tabs {
    display: flex;
    align-items: center;
    height: 30px;
    margin-bottom: 7px;
    padding-left: 13px;
    gap: 12px;
}

.layout-tab {
    padding: 0 21px;
    margin-right: -2px;
    line-height: 30px;
    background-color: #3b4453;
    clip-path: polygon(12px 0, 100% 0, calc(100% - 12px) 100%, 0 100%);
    font-weight: bold;
}

/* Status bar */
.status {
    display: flex;
    gap: 3px;
    height: 30px;
    margin: 0 4px 4px 5px;
}

.status-fill {
    flex: 1;
    margin-right: 2px;
    background-color: #3b4453;
}

.seg {
    display: flex;
    align-items: center;
    background-color: #3b4453;
}

.joined {
    margin-right: -2px;
}

.seg button {
    width: 30px;
    height: 28px;
}

.seg .drop {
    width: 20px;
}

.seg .model {
    width: 59px;
}

.seg .scale {
    width: 42px;
    gap: 4px;
}

.roomy button {
    width: 34px;
}

.seg .on {
    background-color: #608fbf;
}
```
